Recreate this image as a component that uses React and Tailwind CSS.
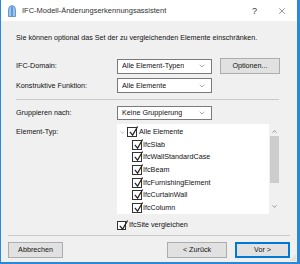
import { ChevronDown, ChevronUp, X } from "lucide-react";

const font = { fontFamily: '"Liberation Sans", Arial, sans-serif' };

const Check = ({ size = "w-[10px] h-[10px]" }) => (
  <span className={`relative inline-block shrink-0 ${size} bg-white border border-[#333]`}>
    <svg viewBox="0 0 12 12" className="absolute left-0 top-[-2px] w-[11px] h-[11px]">
      <polyline points="2,6.5 5,10 10.5,0.5" fill="none" stroke="#222" strokeWidth="1.3" />
    </svg>
  </span>
);

const Select = ({ value, className = "" }) => (
  <div
    className={`flex items-center justify-between w-[95px] bg-white border border-[#7a7a7a] pl-[4px] pr-[5px] ${className}`}
  >
    <span className="truncate">{value}</span>
    <ChevronDown className="w-[8px] h-[8px] text-[#555]" strokeWidth={1.5} />
  </div>
);

const Button = ({ children, primary, className = "" }) => (
  <button
    className={`h-[16px] bg-[#e1e1e1] flex items-center justify-center ${
      primary ? "border-2 border-[#0078d7]" : "border border-[#adadad]"
    } ${className}`}
  >
    {children}
  </button>
);

const items = [
  "IfcSlab",
  "IfcWallStandardCase",
  "IfcBeam",
  "IfcFurnishingElement",
  "IfcCurtainWall",
  "IfcColumn",
];

export default function App() {
  return (
    <div
      style={font}
      className="w-[300px] h-[264px] flex flex-col border-l border-r-[3px] border-b-2 border-[#2b88d8] text-[7.2px] leading-[10px] text-[#111] overflow-hidden"
    >
      <div className="h-[21px] shrink-0 bg-white flex items-center pl-[7px] pr-[10px]">
        <svg viewBox="0 0 8 12" className="w-[8px] h-[12px] mr-[6px]">
          <path d="M0.5 11.5 L0.5 5 Q0.5 0.8 4 0.5 Q7.5 0.8 7.5 5 L7.5 11.5 Z" fill="#9cc6ee" stroke="#4a86c8" strokeWidth="0.8" />
          <path d="M4 1.5 L4 11" stroke="#2f6fb8" strokeWidth="1" />
        </svg>
        <span className="text-[7.5px] text-[#333] flex-1">IFC-Modell-Änderungserkennungsassistent</span>
        <span className="text-[9px] text-[#333] mr-[20px]">?</span>
        <X className="w-[10px] h-[10px] text-[#333]" strokeWidth={1.2} />
      </div>

      <div className="flex-1 bg-[#f0f0f0] flex flex-col px-[7px] pt-[12px]">
        <div className="pl-[8px] h-[10px]">
          Sie können optional das Set der zu vergleichenden Elemente einschränken.
        </div>

        <div className="pl-[8px] mt-[15px] grid grid-cols-[101px_95px_1fr] gap-y-[4px] items-center">
          <span>IFC-Domain:</span>
          <Select value="Alle Element-Typen" className="h-[15px]" />
          <Button className="ml-[8px] w-[60px]">Optionen...</Button>
          <span>Konstruktive Funktion:</span>
          <Select value="Alle Elemente" className="h-[15px]" />
          <span />
        </div>

        <div className="ml-[8px] mr-[11px] mt-[6px] h-px bg-[#c8c8c8]" />

        <div className="pl-[8px] mt-[6px] flex items-center">
          <span className="w-[101px]">Gruppieren nach:</span>
          <Select value="Keine Gruppierung" className="h-[14px]" />
        </div>

        <div className="pl-[8px] mt-[4px] flex">
          <span className="w-[101px] pt-[3px]">Element-Typ:</span>
          <div className="w-[163px] h-[90px] bg-white flex">
            <div className="flex-1 flex flex-col pt-[2px]">
              <div className="h-[12.7px] flex items-center">
                <ChevronDown className="w-[7px] h-[7px] text-[#777] ml-[2px] mr-[1px]" strokeWidth={1.5} />
                <Check />
                <span className="ml-[2px]">Alle Elemente</span>
              </div>
              {items.map((t) => (
                <div key={t} className="h-[12.7px] flex items-center pl-[15px]">
                  <Check />
                  <span className="ml-[1px]">{t}</span>
                </div>
              ))}
            </div>
            <div className="w-[11px] bg-[#f0f0f0] flex flex-col items-center">
              <ChevronUp className="w-[7px] h-[7px] mt-[4px] text-[#555]" strokeWidth={2} />
              <div className="w-[9px] h-[47px] mt-[1px] bg-[#cdcdcd]" />
              <div className="flex-1" />
              <ChevronDown className="w-[7px] h-[7px] mb-[4px] text-[#555]" strokeWidth={2} />
            </div>
          </div>
        </div>

        <div className="pl-[109px] mt-[6px] flex items-center">
          <Check size="w-[9px] h-[9px]" />
          <span className="ml-[3px]">IfcSite vergleichen</span>
        </div>

        <div className="mt-[5px] h-px bg-[#c8c8c8]" />

        <div className="mt-[6px] flex items-center">
          <Button className="w-[55px]">Abbrechen</Button>
          <div className="flex-1" />
          <Button className="w-[60px]">&lt; Zurück</Button>
          <Button primary className="w-[55px] ml-[8px]">Vor &gt;</Button>
        </div>

        <div className="flex-1 relative">
          <svg viewBox="0 0 6 6" className="absolute right-[-6px] bottom-[1px] w-[6px] h-[6px]">
            <rect x="4.5" y="0.5" width="1" height="1" fill="#bbb" />
            <rect x="2.5" y="2.5" width="1" height="1" fill="#bbb" />
            <rect x="4.5" y="2.5" width="1" height="1" fill="#bbb" />
            <rect x="0.5" y="4.5" width="1" height="1" fill="#bbb" />
            <rect x="2.5" y="4.5" width="1" height="1" fill="#bbb" />
            <rect x="4.5" y="4.5" width="1" height="1" fill="#bbb" />
          </svg>
        </div>
      </div>
    </div>
  );
}
